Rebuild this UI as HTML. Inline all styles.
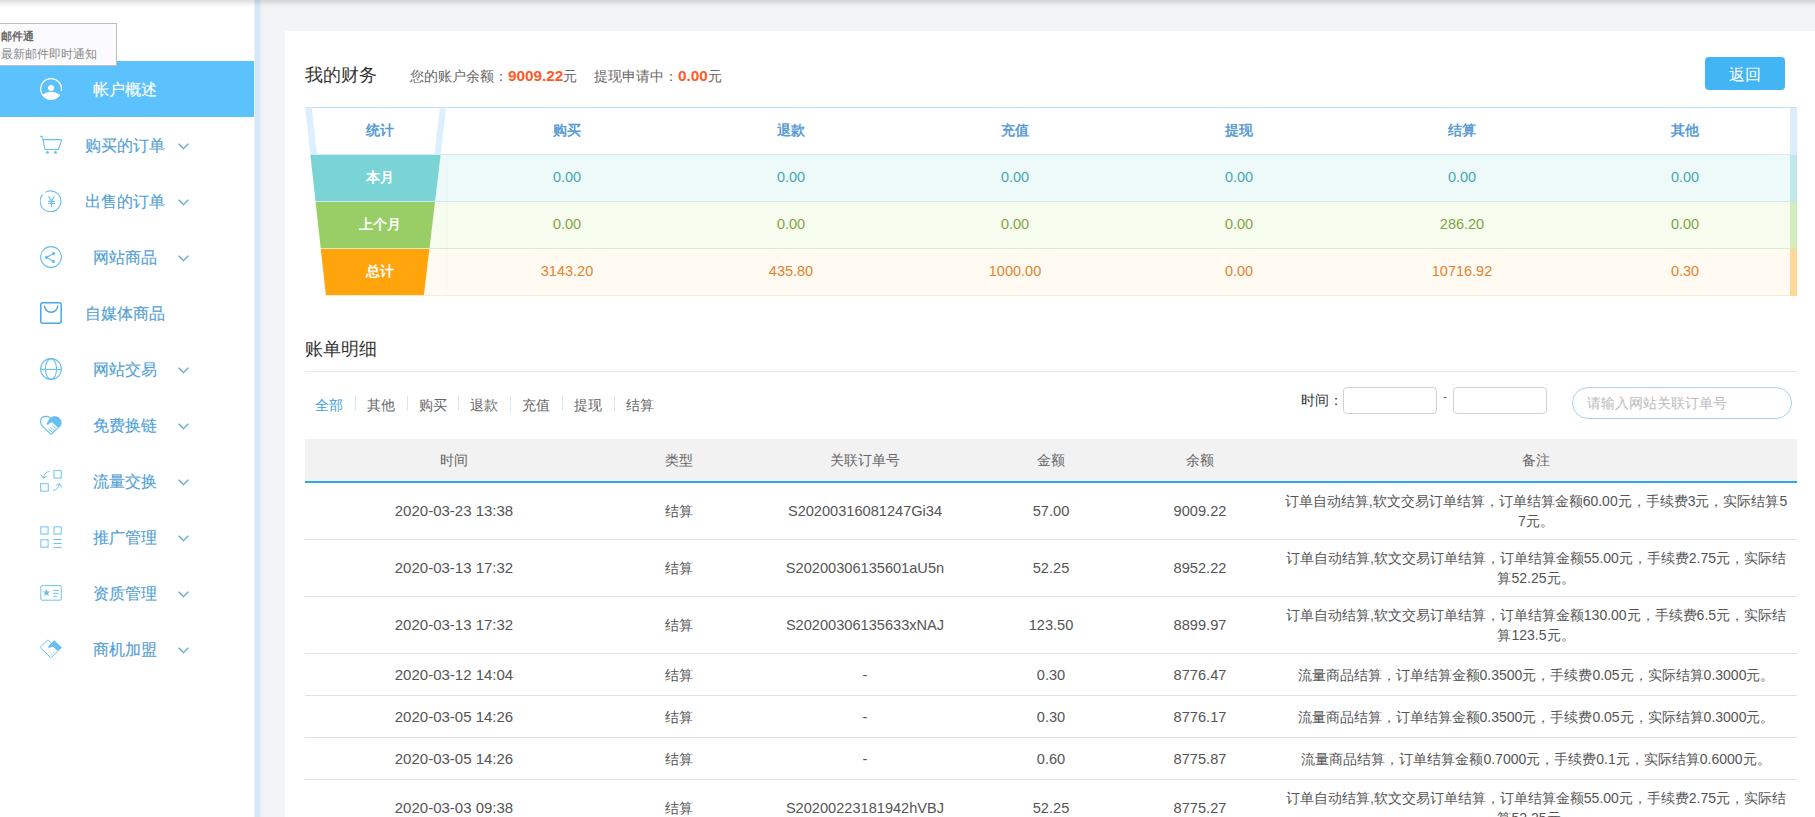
<!DOCTYPE html>
<html><head><meta charset="utf-8">
<style>
*{margin:0;padding:0;box-sizing:border-box}
html,body{width:1815px;height:817px;overflow:hidden;background:#f3f4f6;font-family:"Liberation Sans",sans-serif;color:#333}
.a{position:absolute;white-space:nowrap}
#side{position:absolute;left:0;top:0;width:254px;height:817px;background:#fff}
#sideline{position:absolute;left:254px;top:0;width:1px;height:817px;background:#f1f1f1}
#sideedge{position:absolute;left:255px;top:0;width:8px;height:817px;background:linear-gradient(to right,#d2e7f5 0,#d5e8f5 2px,#d9eaf4 4px,#e6edf5 5.5px,#eff2f6 6.5px,#f3f4f6 8px)}
#topshadow{position:absolute;left:0;top:0;width:1815px;height:10px;background:linear-gradient(to bottom,rgba(0,0,0,.12) 0,rgba(0,0,0,.11) 1.5px,rgba(0,0,0,.065) 3px,rgba(0,0,0,.03) 5px,rgba(0,0,0,.01) 7px,rgba(0,0,0,0) 9px);z-index:50}
.item{position:absolute;left:0;width:254px;height:56px}
.item .ic{position:absolute;left:40px;top:17px;width:22px;height:22px}
.item .tx{position:absolute;left:64px;width:121px;top:1px;height:56px;line-height:56px;text-align:center;font-size:16px;color:#539fd7;-webkit-text-stroke:0.15px #539fd7}
.item .ch{position:absolute;left:178px;top:26px;width:11px;height:7px}
.item.active{background:#5bc2fd}
.item.active .tx{color:#fff;-webkit-text-stroke:0.15px #fff}
#tip{position:absolute;left:-2px;top:23px;width:119px;height:43px;border:1px solid #bdbdbd;background:#fbfbfd;z-index:20}
#tip .l1{position:absolute;left:2px;top:4px;font-size:11px;font-weight:bold;color:#666;line-height:16px;white-space:nowrap}
#tip .l2{position:absolute;left:2px;top:22px;font-size:12px;color:#8a8a8a;line-height:16px;white-space:nowrap}
#panel{position:absolute;left:285px;top:31px;width:1540px;height:800px;background:#fff}
.c{position:absolute;white-space:nowrap;text-align:center;transform:translateX(-50%)}
.h18{font-size:18px;color:#333;line-height:24px}
.bal{font-size:14px;color:#666;line-height:20px}
.bal b{color:#ff5a26;font-size:15.3px}
#btn{position:absolute;left:1705px;top:57px;width:80px;height:33px;border-radius:4px;background:#42b5f5;color:#fff;font-size:16px;line-height:35px;text-align:center}
.ft{font-size:14.5px;line-height:20px}
.fh{font-size:14px;font-weight:bold;color:#5a9bd5;line-height:20px}
.fw{font-size:14px;font-weight:bold;color:#fff;line-height:20px}
.tab{font-size:14px;line-height:20px;color:#666}
.sep{position:absolute;width:1px;height:15px;top:396px;background:#dfe5ec}
.inp{position:absolute;top:387px;width:94px;height:27px;border:1px solid #d2d2d2;border-radius:4px;background:#fff}
.td{font-size:15px;color:#555;line-height:20px}
.to{font-size:14.6px;color:#555;line-height:20px}
.tc{font-size:14px;color:#555;line-height:20px}
.th{font-size:14px;color:#666;line-height:20px}
.rl{position:absolute;left:305px;width:1492px;height:1px;background:#e0e0e0}
</style></head><body>
<div id="side"></div><div id="sideline"></div><div id="sideedge"></div><div id="topshadow"></div>
<div id="tip"><div class="l1">邮件通</div><div class="l2">最新邮件即时通知</div></div>
<div class="item active" style="top:61px"><svg class="ic" viewBox="0 0 22 22"><path d="M21.35 12.8 A10.4 10.4 0 1 0 2.6 17" fill="none" stroke="#fff" stroke-width="1.2"/><circle cx="11" cy="10" r="3" fill="#fff"/><path d="M2 17.1 Q11 10.6 20.2 17.1 Q17 22.1 11 22.1 Q5 22.1 2 17.1Z" fill="#fff"/></svg><div class="tx">帐户概述</div></div>
<div class="item" style="top:117px"><svg class="ic" viewBox="0 0 22 22"><path d="M0.2 2.4 H1.6 Q2.3 2.4 2.5 3.3 L5 15.5 H18.4 L21.3 6.8 Q21.6 5.6 20.4 5.6 H2.7" fill="none" stroke="#66bff0" stroke-width="1.1" stroke-linejoin="round"/><circle cx="7.4" cy="18.4" r="1.45" fill="#66bff0"/><circle cx="15.5" cy="18.4" r="1.45" fill="#66bff0"/></svg><div class="tx">购买的订单</div><svg class="ch" viewBox="0 0 11 7"><path d="M0.6 0.8 L5.5 5.7 L10.4 0.8" fill="none" stroke="#5aa8df" stroke-width="1.3"/></svg></div>
<div class="item" style="top:173px"><svg class="ic" viewBox="0 0 22 22"><path d="M5.2 2.4 A10.4 10.4 0 1 1 2.6 4.6" fill="none" stroke="#66bff0" stroke-width="1.1"/><path d="M8.5 6.3 L11.5 10.6 L14.6 6.3 M8.2 11.4 H15 M8.2 13.5 H15 M11.5 10.6 V17" fill="none" stroke="#66bff0" stroke-width="1.1"/></svg><div class="tx">出售的订单</div><svg class="ch" viewBox="0 0 11 7"><path d="M0.6 0.8 L5.5 5.7 L10.4 0.8" fill="none" stroke="#5aa8df" stroke-width="1.3"/></svg></div>
<div class="item" style="top:229px"><svg class="ic" viewBox="0 0 22 22"><circle cx="11" cy="11" r="10.4" fill="none" stroke="#66bff0" stroke-width="1.1"/><path d="M13.5 7.4 L6.5 11.4 L13.5 15.5" fill="none" stroke="#66bff0" stroke-width="1.1"/><circle cx="13.5" cy="7.4" r="1.6" fill="#66bff0"/><circle cx="6.5" cy="11.4" r="1.6" fill="#66bff0"/><circle cx="13.5" cy="15.5" r="1.6" fill="#66bff0"/></svg><div class="tx">网站商品</div><svg class="ch" viewBox="0 0 11 7"><path d="M0.6 0.8 L5.5 5.7 L10.4 0.8" fill="none" stroke="#5aa8df" stroke-width="1.3"/></svg></div>
<div class="item" style="top:285px"><svg class="ic" viewBox="0 0 22 22"><rect x="0.8" y="0.8" width="20.4" height="20.4" rx="2" fill="none" stroke="#4aa6e6" stroke-width="1.5"/><path d="M4.4 3.6 A6.7 6.7 0 0 0 17.8 3.6" fill="none" stroke="#4aa6e6" stroke-width="1.5"/></svg><div class="tx">自媒体商品</div></div>
<div class="item" style="top:341px"><svg class="ic" viewBox="0 0 22 22"><circle cx="11" cy="11" r="10.4" fill="none" stroke="#66bff0" stroke-width="1.1"/><ellipse cx="11" cy="11" rx="5.6" ry="10.4" fill="none" stroke="#66bff0" stroke-width="1.1"/><path d="M0.6 11.4 H21.4" stroke="#66bff0" stroke-width="1.1"/></svg><div class="tx">网站交易</div><svg class="ch" viewBox="0 0 11 7"><path d="M0.6 0.8 L5.5 5.7 L10.4 0.8" fill="none" stroke="#5aa8df" stroke-width="1.3"/></svg></div>
<div class="item" style="top:397px"><svg class="ic" viewBox="0 0 22 22"><path d="M10.2 3.6 C8.6 2.3 7 2.3 5.4 2.4 C2.3 2.6 0.4 5 0.6 8.2 C0.7 9.8 1.4 11.2 2.6 12.4 L10.9 20.4 L18.2 13.8" fill="none" stroke="#66bff0" stroke-width="1.1" stroke-linejoin="round"/><path d="M10 3.7 C11.6 2.6 13.6 2 15.6 2.3 C19.3 2.8 21.6 5.5 21.6 9 C21.6 11.2 20.4 12.7 18.4 14.2 L11.8 8.1 L8.2 10.6 C7.2 11.2 6.1 10.2 6.8 9.3 Z" fill="#66bff0"/><path d="M12.2 11.1 L16.2 14.8 M10.2 13.1 L14.4 16.6 M8.3 14.9 L12.5 18.4" stroke="#66bff0" stroke-width="1"/></svg><div class="tx">免费换链</div><svg class="ch" viewBox="0 0 11 7"><path d="M0.6 0.8 L5.5 5.7 L10.4 0.8" fill="none" stroke="#5aa8df" stroke-width="1.3"/></svg></div>
<div class="item" style="top:453px"><svg class="ic" viewBox="0 0 22 22"><rect x="13.95" y="0.65" width="7.3" height="7.4" fill="none" stroke="#66bff0" stroke-width="0.95"/><rect x="0.65" y="13.75" width="7.6" height="7.4" fill="none" stroke="#66bff0" stroke-width="0.95"/><path d="M9.6 1.5 C6.6 1.5 4.4 3.6 3.4 8.1 M1.1 4.8 L3.4 8.1 L6.7 6.3" fill="none" stroke="#66bff0" stroke-width="0.95"/><path d="M12.9 20.4 C16.4 20.2 18.6 18 19.5 13.5 M16.2 15.5 L19.5 13.5 L21.7 17.3" fill="none" stroke="#66bff0" stroke-width="0.95"/></svg><div class="tx">流量交换</div><svg class="ch" viewBox="0 0 11 7"><path d="M0.6 0.8 L5.5 5.7 L10.4 0.8" fill="none" stroke="#5aa8df" stroke-width="1.3"/></svg></div>
<div class="item" style="top:509px"><svg class="ic" viewBox="0 0 22 22"><rect x="0.85" y="0.85" width="7.2" height="7.2" fill="none" stroke="#66bff0" stroke-width="0.95"/><rect x="13.95" y="0.85" width="7.3" height="7.2" fill="none" stroke="#66bff0" stroke-width="0.95"/><rect x="0.85" y="13.75" width="7.2" height="7.4" fill="none" stroke="#66bff0" stroke-width="0.95"/><path d="M13.5 13.5 H21.7 M13.5 17.5 H21.7 M13.5 21.4 H21.7" stroke="#66bff0" stroke-width="0.95"/></svg><div class="tx">推广管理</div><svg class="ch" viewBox="0 0 11 7"><path d="M0.6 0.8 L5.5 5.7 L10.4 0.8" fill="none" stroke="#5aa8df" stroke-width="1.3"/></svg></div>
<div class="item" style="top:565px"><svg class="ic" viewBox="0 0 22 22"><rect x="0.85" y="3.6" width="20.4" height="14.6" rx="1.2" fill="none" stroke="#66bff0" stroke-width="0.95"/><path d="M6.5 7 L7.5 9.5 L10.1 9.6 L8.1 11.3 L8.8 13.9 L6.5 12.5 L4.2 13.9 L4.9 11.3 L2.9 9.6 L5.5 9.5 Z" fill="#66bff0"/><path d="M13.3 8.5 H18.8 M13.3 11.4 H18.8 M13.3 14.4 H16.8" stroke="#66bff0" stroke-width="0.95"/></svg><div class="tx">资质管理</div><svg class="ch" viewBox="0 0 11 7"><path d="M0.6 0.8 L5.5 5.7 L10.4 0.8" fill="none" stroke="#5aa8df" stroke-width="1.3"/></svg></div>
<div class="item" style="top:621px"><svg class="ic" viewBox="0 0 22 22"><path d="M11.4 4.8 L8.4 2.5 Q7.8 2 7.2 2.5 L0.6 8.9 Q0.1 9.4 0.6 9.9 L10.4 19.3 Q10.9 19.8 11.4 19.3 L18.4 12.6" fill="none" stroke="#66bff0" stroke-width="0.95" stroke-linejoin="round"/><path d="M14.2 2.25 L21.9 9.4 L18 12.9 L12.8 8.4 L10 9.7 C8.6 10.2 7.6 9.2 8.4 8.2 L11.2 5.2 Z" fill="#66bff0"/><path d="M11.1 15.8 L12 16.6 M13.1 14 L14 14.8" stroke="#66bff0" stroke-width="0.9"/></svg><div class="tx">商机加盟</div><svg class="ch" viewBox="0 0 11 7"><path d="M0.6 0.8 L5.5 5.7 L10.4 0.8" fill="none" stroke="#5aa8df" stroke-width="1.3"/></svg></div>
<div id="panel"></div>
<div class="a h18" style="left:305px;top:63px">我的财务</div>
<div class="a bal" style="left:410px;top:66px">您的账户余额：<b>9009.22</b>元</div>
<div class="a bal" style="left:594px;top:66px">提现申请中：<b>0.00</b>元</div>
<div id="btn">返回</div>
<div class="a" style="left:305px;top:107px;width:1492px;height:1px;background:#bfe0f8"></div>
<div class="a" style="left:305px;top:108px;width:1492px;height:46px;background:#ffffff"></div>
<div class="a" style="left:305px;top:154px;width:1492px;height:1px;background:#d4eafa"></div>
<div class="a" style="left:1790px;top:108px;width:7px;height:47px;background:#dcecf9"></div>
<div class="a" style="left:305px;top:155px;width:1492px;height:46px;background:#eefafa"></div>
<div class="a" style="left:305px;top:201px;width:1492px;height:1px;background:#c9ebeb"></div>
<div class="a" style="left:1790px;top:155px;width:7px;height:47px;background:#c0e8e8"></div>
<div class="a" style="left:305px;top:202px;width:1492px;height:46px;background:#f6fdef"></div>
<div class="a" style="left:305px;top:248px;width:1492px;height:1px;background:#d6ecca"></div>
<div class="a" style="left:1790px;top:202px;width:7px;height:47px;background:#d3ebbd"></div>
<div class="a" style="left:305px;top:249px;width:1492px;height:46px;background:#fffaf2"></div>
<div class="a" style="left:305px;top:295px;width:1492px;height:1px;background:#fde9d0"></div>
<div class="a" style="left:1790px;top:249px;width:7px;height:47px;background:#fdd898"></div>
<div class="a" style="left:446px;top:155px;width:1px;height:140px;background:rgba(0,0,0,0.02)"></div>
<svg class="a" style="left:0;top:0" width="1815" height="817" viewBox="0 0 1815 817"><polygon points="304,107.5 305.1,107.5 326.0034,296 304,296" fill="#fff"/><polygon points="305.1553,107.5 311.6553,107.5 316.9982,154 310.2982,154" fill="#dcefff"/><polygon points="440.04045,107.5 446.24045,107.5 440.70230000000004,154 434.50230000000005,154" fill="#dcefff"/><polygon points="310.40880000000004,155 440.58320000000003,155 435.1046,201 315.4964,201" fill="#7ad3d4"/><polygon points="315.607,202 434.9855,202 429.50690000000003,248 320.69460000000004,248" fill="#99cd66"/><polygon points="320.8052,249 429.3878,249 423.9092,295 325.8928,295" fill="#ffa40b"/></svg>
<div class="c fh" style="left:380px;top:120px">统计</div>
<div class="c fh" style="left:567px;top:120px">购买</div>
<div class="c fh" style="left:791px;top:120px">退款</div>
<div class="c fh" style="left:1015px;top:120px">充值</div>
<div class="c fh" style="left:1239px;top:120px">提现</div>
<div class="c fh" style="left:1462px;top:120px">结算</div>
<div class="c fh" style="left:1685px;top:120px">其他</div>
<div class="c fw" style="left:380px;top:167px">本月</div>
<div class="c ft" style="left:567px;top:167px;color:#45a9ad">0.00</div>
<div class="c ft" style="left:791px;top:167px;color:#45a9ad">0.00</div>
<div class="c ft" style="left:1015px;top:167px;color:#45a9ad">0.00</div>
<div class="c ft" style="left:1239px;top:167px;color:#45a9ad">0.00</div>
<div class="c ft" style="left:1462px;top:167px;color:#45a9ad">0.00</div>
<div class="c ft" style="left:1685px;top:167px;color:#45a9ad">0.00</div>
<div class="c fw" style="left:380px;top:214px">上个月</div>
<div class="c ft" style="left:567px;top:214px;color:#7fa540">0.00</div>
<div class="c ft" style="left:791px;top:214px;color:#7fa540">0.00</div>
<div class="c ft" style="left:1015px;top:214px;color:#7fa540">0.00</div>
<div class="c ft" style="left:1239px;top:214px;color:#7fa540">0.00</div>
<div class="c ft" style="left:1462px;top:214px;color:#7fa540">286.20</div>
<div class="c ft" style="left:1685px;top:214px;color:#7fa540">0.00</div>
<div class="c fw" style="left:380px;top:261px">总计</div>
<div class="c ft" style="left:567px;top:261px;color:#e5822e">3143.20</div>
<div class="c ft" style="left:791px;top:261px;color:#e5822e">435.80</div>
<div class="c ft" style="left:1015px;top:261px;color:#e5822e">1000.00</div>
<div class="c ft" style="left:1239px;top:261px;color:#e5822e">0.00</div>
<div class="c ft" style="left:1462px;top:261px;color:#e5822e">10716.92</div>
<div class="c ft" style="left:1685px;top:261px;color:#e5822e">0.30</div>
<div class="a h18" style="left:305px;top:337px">账单明细</div>
<div class="a" style="left:305px;top:371px;width:1492px;height:1px;background:#e8e8e8"></div>
<div class="a tab" style="left:315.2px;top:395px;color:#3ca0e8">全部</div>
<div class="sep" style="left:355px"></div>
<div class="a tab" style="left:366.95px;top:395px;color:#666">其他</div>
<div class="sep" style="left:407px"></div>
<div class="a tab" style="left:418.7px;top:395px;color:#666">购买</div>
<div class="sep" style="left:458px"></div>
<div class="a tab" style="left:470.45px;top:395px;color:#666">退款</div>
<div class="sep" style="left:510px"></div>
<div class="a tab" style="left:522.2px;top:395px;color:#666">充值</div>
<div class="sep" style="left:562px"></div>
<div class="a tab" style="left:573.95px;top:395px;color:#666">提现</div>
<div class="sep" style="left:614px"></div>
<div class="a tab" style="left:625.7px;top:395px;color:#666">结算</div>
<div class="a" style="left:1301px;top:390px;font-size:14px;color:#333;line-height:20px">时间：</div>
<div class="inp" style="left:1343px"></div>
<div class="a" style="left:1443px;top:389px;font-size:12px;color:#666;line-height:16px">-</div>
<div class="inp" style="left:1453px"></div>
<div class="a" style="left:1572px;top:387px;width:220px;height:32px;border:1px solid #a9d3f1;border-radius:16px;background:#fff"></div>
<div class="a" style="left:1587px;top:393px;font-size:14px;color:#bbb;line-height:20px">请输入网站关联订单号</div>
<div class="a" style="left:305px;top:439px;width:1492px;height:42px;background:#f2f2f2"></div>
<div class="a" style="left:305px;top:481px;width:1492px;height:2px;background:#2ea7ec"></div>
<div class="c th" style="left:454px;top:450px">时间</div>
<div class="c th" style="left:679px;top:450px">类型</div>
<div class="c th" style="left:865px;top:450px">关联订单号</div>
<div class="c th" style="left:1051px;top:450px">金额</div>
<div class="c th" style="left:1200px;top:450px">余额</div>
<div class="c th" style="left:1536px;top:450px">备注</div>
<div class="c td" style="left:454px;top:501.0px">2020-03-23 13:38</div>
<div class="c tc" style="left:679px;top:501.0px">结算</div>
<div class="c to" style="left:865px;top:501.0px">S20200316081247Gi34</div>
<div class="c to" style="left:1051px;top:501.0px">57.00</div>
<div class="c to" style="left:1200px;top:501.0px">9009.22</div>
<div class="c tc" style="left:1536px;top:491.0px;line-height:20px">订单自动结算,软文交易订单结算，订单结算金额60.00元，手续费3元，实际结算5<br>7元。</div>
<div class="rl" style="top:539px"></div>
<div class="c td" style="left:454px;top:558.0px">2020-03-13 17:32</div>
<div class="c tc" style="left:679px;top:558.0px">结算</div>
<div class="c to" style="left:865px;top:558.0px">S20200306135601aU5n</div>
<div class="c to" style="left:1051px;top:558.0px">52.25</div>
<div class="c to" style="left:1200px;top:558.0px">8952.22</div>
<div class="c tc" style="left:1536px;top:548.0px;line-height:20px">订单自动结算,软文交易订单结算，订单结算金额55.00元，手续费2.75元，实际结<br>算52.25元。</div>
<div class="rl" style="top:596px"></div>
<div class="c td" style="left:454px;top:615.0px">2020-03-13 17:32</div>
<div class="c tc" style="left:679px;top:615.0px">结算</div>
<div class="c to" style="left:865px;top:615.0px">S20200306135633xNAJ</div>
<div class="c to" style="left:1051px;top:615.0px">123.50</div>
<div class="c to" style="left:1200px;top:615.0px">8899.97</div>
<div class="c tc" style="left:1536px;top:605.0px;line-height:20px">订单自动结算,软文交易订单结算，订单结算金额130.00元，手续费6.5元，实际结<br>算123.5元。</div>
<div class="rl" style="top:653px"></div>
<div class="c td" style="left:454px;top:664.5px">2020-03-12 14:04</div>
<div class="c tc" style="left:679px;top:664.5px">结算</div>
<div class="c to" style="left:865px;top:664.5px">-</div>
<div class="c to" style="left:1051px;top:664.5px">0.30</div>
<div class="c to" style="left:1200px;top:664.5px">8776.47</div>
<div class="c tc" style="left:1536px;top:664.5px;line-height:20px">流量商品结算，订单结算金额0.3500元，手续费0.05元，实际结算0.3000元。</div>
<div class="rl" style="top:695px"></div>
<div class="c td" style="left:454px;top:706.5px">2020-03-05 14:26</div>
<div class="c tc" style="left:679px;top:706.5px">结算</div>
<div class="c to" style="left:865px;top:706.5px">-</div>
<div class="c to" style="left:1051px;top:706.5px">0.30</div>
<div class="c to" style="left:1200px;top:706.5px">8776.17</div>
<div class="c tc" style="left:1536px;top:706.5px;line-height:20px">流量商品结算，订单结算金额0.3500元，手续费0.05元，实际结算0.3000元。</div>
<div class="rl" style="top:737px"></div>
<div class="c td" style="left:454px;top:748.5px">2020-03-05 14:26</div>
<div class="c tc" style="left:679px;top:748.5px">结算</div>
<div class="c to" style="left:865px;top:748.5px">-</div>
<div class="c to" style="left:1051px;top:748.5px">0.60</div>
<div class="c to" style="left:1200px;top:748.5px">8775.87</div>
<div class="c tc" style="left:1536px;top:748.5px;line-height:20px">流量商品结算，订单结算金额0.7000元，手续费0.1元，实际结算0.6000元。</div>
<div class="rl" style="top:779px"></div>
<div class="c td" style="left:454px;top:798.0px">2020-03-03 09:38</div>
<div class="c tc" style="left:679px;top:798.0px">结算</div>
<div class="c to" style="left:865px;top:798.0px">S20200223181942hVBJ</div>
<div class="c to" style="left:1051px;top:798.0px">52.25</div>
<div class="c to" style="left:1200px;top:798.0px">8775.27</div>
<div class="c tc" style="left:1536px;top:788.0px;line-height:20px">订单自动结算,软文交易订单结算，订单结算金额55.00元，手续费2.75元，实际结<br>算52.25元。</div>
</body></html>
